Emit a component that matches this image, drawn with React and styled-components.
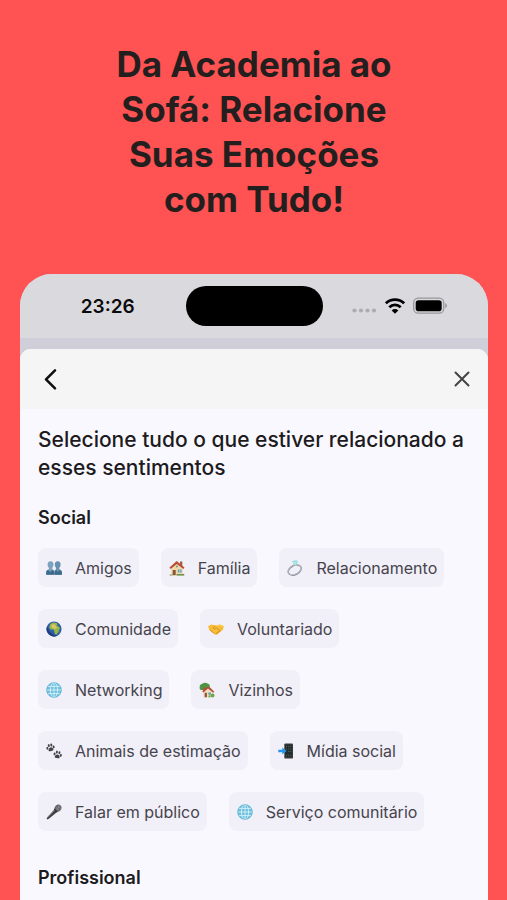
import React, { useState } from 'react';
import styled, { createGlobalStyle } from 'styled-components';

const GlobalStyle = createGlobalStyle`
    * {
        box-sizing: border-box;
    }
    body {
        margin: 0;
        background: #ff5252;
        font-family: Inter, 'Liberation Sans', sans-serif;
        color: #1d1b20;
    }
    h1, h2, h3 {
        margin: 0;
    }
    button {
        font: inherit;
        color: inherit;
        border: 0;
        padding: 0;
        background: none;
        cursor: pointer;
    }
`;

const Page = styled.main`
    min-height: 100vh;
    padding: 42px 19px 0 20px;
    display: flex;
    flex-direction: column;
    background: #ff5252;
`;

const Headline = styled.h1`
    max-width: 300px;
    margin: 0 auto 52px;
    font-size: 35px;
    line-height: 45px;
    font-weight: 700;
    text-align: center;
    color: #231f1e;
`;

const Phone = styled.section`
    flex: 1;
    display: flex;
    flex-direction: column;
    border-radius: 32px 32px 0 0;
    overflow: hidden;
    background: #d0ced8;
`;

const StatusBar = styled.div`
    height: 64px;
    display: grid;
    grid-template-columns: 1fr 137px 1fr;
    align-items: center;
    background: #dad9de;
`;

const Time = styled.span`
    padding-left: 10px;
    font-size: 19px;
    font-weight: 600;
    text-align: center;
    color: #0b0b0c;
`;

const Island = styled.div`
    height: 40px;
    border-radius: 20px;
    background: #000;
`;

const StatusIcons = styled.div`
    display: flex;
    justify-content: flex-end;
    align-items: center;
    gap: 8px;
    padding-right: 40px;
`;

const Sheet = styled.div`
    flex: 1;
    margin-top: 11px;
    border-radius: 11px 11px 0 0;
    overflow: hidden;
    background: #f9f8ff;
`;

const SheetHeader = styled.header`
    height: 60px;
    padding: 0 10px 0 14px;
    display: flex;
    justify-content: space-between;
    align-items: center;
    background: #f5f5f5;
`;

const IconButton = styled.button`
    width: 32px;
    height: 32px;
    display: flex;
    justify-content: center;
    align-items: center;
`;

const Content = styled.div`
    padding: 17px 18px 8px;
`;

const Question = styled.h2`
    font-size: 21px;
    line-height: 28px;
    font-weight: 500;
`;

const Group = styled.section`
    margin-top: ${(props) => props.$space}px;
`;

const GroupTitle = styled.h3`
    font-size: 18px;
    line-height: 24px;
    font-weight: 600;
`;

const Chips = styled.div`
    margin-top: 18px;
    display: flex;
    flex-wrap: wrap;
    gap: 22px;
`;

const Chip = styled.button`
    height: 39px;
    padding: 0 7px 0 8px;
    display: flex;
    align-items: center;
    gap: 13px;
    border-radius: 8px;
    background: ${(props) => (props.$active ? '#dcd8f0' : '#f1eff8')};
    font-size: 16px;
    color: #46444c;
    white-space: nowrap;
`;

const Picture = styled.svg`
    width: 16px;
    height: 16px;
    flex: none;
`;

const Globe = () => (
    <>
        <circle cx="8" cy="8" r="7.5" fill="#6fc0df" />
        <g fill="none" stroke="#dff5fb" strokeWidth="0.8">
            <ellipse cx="8" cy="8" rx="3.6" ry="7.3" />
            <path d="M8 .6v14.8M.6 8h14.8M2 4.4h12M2 11.6h12" />
        </g>
        <circle cx="8" cy="8" r="7.4" fill="none" stroke="#58aed2" strokeWidth="0.6" />
    </>
);

const pictures = {
    people: (
        <>
            <path d="M4.600 1.200c2 0 3 1.500 2.900 3.400-.1 1.700-.6 2.700-1.300 3.400v1.200c1.500.5 2.200 1.500 2.200 3.200v2.400H.2v-2.400c0-1.700.9-2.700 2.700-3.200V8C2.200 7.300 1.700 6.300 1.600 4.600c-.1-1.900 1-3.400 3-3.400z" fill="#7da2c0" />
            <path d="M11.700 1.200c2 0 3 1.500 2.900 3.400-.1 1.700-.6 2.700-1.300 3.400v1.200c1.700.5 2.600 1.500 2.600 3.200v2.400H8.300v-2.400c0-1.700.5-2.700 1.800-3.200V8c-.7-.7-1.200-1.700-1.300-3.400-.1-1.900.9-3.400 2.900-3.400z" fill="#6690b0" />
            <path d="M.2 14.800v-2.400c.1-1.200.8-2 1.900-2.600l2.100 2.300 2.200-2.300c1.300.5 1.800 1.400 1.800 2.600v2.400zM8.700 14.800v-2.400c.1-1.100.6-1.900 1.400-2.500l1.700 2.200 2-2.200c1.300.6 2 1.400 2.100 2.500v2.400z" fill="#3d6b8c" />
        </>
    ),
    house: (
        <>
            <path d="M2.300 8.200 8 3.400l5.800 4.800v7H2.300z" fill="#efd9a9" />
            <path d="M11 1.600h2.300v4.600L11 4.400z" fill="#9d5a45" />
            <path d="M7.700 1 .5 7.600l1.200 1.500L7.800 4l6.500 5.100 1.200-1.500z" fill="#bd4c35" />
            <path d="M3.700 10h3v5.200h-3z" fill="#8c5439" />
            <path d="M8.800 9.500h3.700v3H8.800z" fill="#629fba" />
            <path d="M10.700 9.500v3" stroke="#fff" strokeWidth=".5" />
            <circle cx="7.900" cy="6.600" r="1" fill="#7a92a2" />
            <path d="M7.500 14h7.700v1.600H7.500z" fill="#6e8f4b" />
            <path d="M.6 14.500h3v1H.6z" fill="#789a50" />
        </>
    ),
    ring: (
        <>
            <ellipse cx="7.700" cy="10" rx="6.900" ry="4.500" transform="rotate(-28 7.700 10)" fill="none" stroke="#858991" strokeWidth="1.500" />
            <ellipse cx="7.500" cy="9.700" rx="6.900" ry="4.500" transform="rotate(-28 7.500 9.700)" fill="none" stroke="#d4d7dc" strokeWidth=".6" />
            <path d="m4.700 1.600 2-1.200 3.400.2 1.100 1.700-2.700 3.300z" fill="#8fdbe0" />
            <path d="m4.700 1.600 3 .7 3.500 0M7.700 2.300l.8 3.300" stroke="#d8f7f5" strokeWidth=".5" fill="none" />
        </>
    ),
    earth: (
        <>
            <circle cx="8" cy="8" r="7.600" fill="#2f5fa8" />
            <path d="M4.200 2.900 7 1.600l3.700.5 1 1.600-1.200 1 2 .5 1.800 2.400-1.200 1-.8 2.700-2 2.400-1.400-.6-.7-3-1-1.600-2.700-.1-1.300-2z" fill="#94b747" />
            <path d="m5.500 3.600 3.400-.3 1 1.600 1.200 2-2.200 1-3.300-1.200z" fill="#d7c76c" />
            <path d="M1.200 5A7.600 7.600 0 0 0 12 14.500C7 14.500 2.500 11.500 1.200 5z" fill="#1d3d7f" />
            <path d="m12.900 10.800.8-.8-.3 1.800z" fill="#94b747" />
        </>
    ),
    handshake: (
        <>
            <path d="m.2 4.900 3.200-1.300 4 .9 4.500-1 3.900 1.600-.9 3.900-2 1-3.700 3.500-2.100.2-4-3.100L1.100 8.900z" fill="#f6bd38" />
            <path d="m7.200 4.700-2 2.500c.8 1 2 .8 3.100-.3l4.500 3.300M6.100 12.300l-4-3.200" fill="none" stroke="#d68a1e" strokeWidth=".9" />
            <path d="m7.300 12.900 2 .1 3.600-3.200-1.500-.6-3.300 2.600z" fill="#e79c26" />
            <path d="m8 4.700 3.800-.7 2.900 1.300" fill="none" stroke="#ffda68" strokeWidth=".8" />
        </>
    ),
    globe: <Globe />,
    garden: (
        <>
            <path d="M5.200 7.400h1.500v6H5.200z" fill="#76543b" />
            <path d="M.7 5.500C.2 3.700 1.600 2 3.300 1.700 4.600.3 7.200.3 8.500 1.600c1.800.1 2.800 2 2.200 3.500L6.500 8 2 8.100C1.100 7.600.4 6.700.7 5.500z" fill="#4f9442" />
            <path d="m4.200 9.500 4.600-4 5 4.300v5.500H4.200z" fill="#f0dfbd" />
            <path d="m5 6.100 5.100-1.600 5.200 5.200-1 1L9 6.400l-4.600 4.200-1.100-.9z" fill="#b54f3a" />
            <path d="M5.700 10.800h2.200v4.500H5.700z" fill="#8c5439" />
            <path d="M9.400 10.500h2.500v2.300H9.400z" fill="#6599b0" />
            <circle cx="13.600" cy="13.500" r="1.900" fill="#68a84c" />
            <circle cx="10.500" cy="14.400" r="1.100" fill="#68a84c" />
        </>
    ),
    paws: (
        <g fill="#454347">
            <g transform="rotate(-12 4.500 5)">
                <ellipse cx="1.400" cy="4.600" rx="1" ry="1.400" />
                <ellipse cx="3.300" cy="2.300" rx="1" ry="1.500" />
                <ellipse cx="5.900" cy="2.300" rx="1" ry="1.500" />
                <ellipse cx="7.800" cy="4.600" rx="1" ry="1.400" />
                <path d="M4.600 4.400c1.400 0 2.600 1.700 2.500 2.800-.1 1-1.200 1-2.500.8-1.300.2-2.400.2-2.500-.8-.1-1.100 1.100-2.800 2.500-2.800z" />
            </g>
            <g transform="translate(7 7) rotate(12 4.500 5)">
                <ellipse cx="1.400" cy="4.600" rx="1" ry="1.400" />
                <ellipse cx="3.300" cy="2.300" rx="1" ry="1.500" />
                <ellipse cx="5.900" cy="2.300" rx="1" ry="1.500" />
                <ellipse cx="7.800" cy="4.600" rx="1" ry="1.400" />
                <path d="M4.600 4.400c1.400 0 2.600 1.700 2.500 2.800-.1 1-1.200 1-2.500.8-1.300.2-2.400.2-2.500-.8-.1-1.100 1.100-2.800 2.500-2.800z" />
            </g>
        </g>
    ),
    phone: (
        <>
            <rect x="6.300" y=".4" width="8.700" height="15.200" rx="1.200" fill="#3d3b3e" />
            <rect x="7.100" y="1.800" width="7.100" height="12" fill="#252b2a" />
            <g fill="#477267">
                <path d="M8 3h1v1H8zM10.200 3h1v1h-1zM12.300 3h1v1h-1zM8 5.500h1v1H8zM10.200 5.500h1v1h-1zM12.300 5.500h1v1h-1zM10.200 8h1v1h-1zM12.300 8h1v1h-1zM8 11.800h1v1H8zM10.200 11.800h1v1h-1zM12.300 11.800h1v1h-1z" />
            </g>
            <path d="M.3 6.800h4V4.600L8.600 8l-4.300 3.400V9.200h-4z" fill="#2495ed" />
        </>
    ),
    mic: (
        <>
            <path d="m8.600 5.200 2.500 2.700-7.900 6.600-1.800.9-.8-.8.9-1.700z" fill="#414044" />
            <path d="m8.800 5.900-7.400 8" stroke="#89878c" strokeWidth=".8" />
            <path d="M8.500 4.900c-.1-3 2.600-5 5-4.200 2.100.7 2.700 3.200 1.400 5-1 1.500-2.600 2.200-4.200 2z" fill="#69676b" />
            <path d="m8.200 4.800 3.100 3.300" stroke="#2e2d30" strokeWidth="1.200" />
            <path d="m10.100 3.300 3.500 3.300M11.700 1.800l3 3M10.300 5.800l4-4.200" stroke="#a09da2" strokeWidth=".5" />
        </>
    ),
};

const socialTags = [
    { label: 'Amigos', picture: 'people' },
    { label: 'Família', picture: 'house' },
    { label: 'Relacionamento', picture: 'ring' },
    { label: 'Comunidade', picture: 'earth' },
    { label: 'Voluntariado', picture: 'handshake' },
    { label: 'Networking', picture: 'globe' },
    { label: 'Vizinhos', picture: 'garden' },
    { label: 'Animais de estimação', picture: 'paws' },
    { label: 'Mídia social', picture: 'phone' },
    { label: 'Falar em público', picture: 'mic' },
    { label: 'Serviço comunitário', picture: 'globe' },
];

const Status = () => (
    <StatusBar>
        <Time>23:26</Time>
        <Island />
        <StatusIcons>
            <svg width="25" height="18" viewBox="0 0 25 18" fill="#adacb1">
                <circle cx="2.500" cy="13.500" r="2.100" />
                <circle cx="9" cy="13.500" r="2.100" />
                <circle cx="15.500" cy="13.500" r="2.100" />
                <circle cx="22" cy="13.500" r="2.100" />
            </svg>
            <svg width="20" height="16" viewBox="0 0 20 16" fill="none" stroke="#000" strokeWidth="2.800">
                <path d="M.9 5.300a13 13 0 0 1 18.200 0" />
                <path d="M4.300 9.200a8.200 8.200 0 0 1 11.400 0" />
                <path d="M10 15.700 6.700 12.400a4.600 4.600 0 0 1 6.600 0z" fill="#000" stroke="none" />
            </svg>
            <svg width="35" height="18" viewBox="0 0 35 18">
                <rect x=".7" y="1.200" width="30" height="15" rx="4.500" fill="none" stroke="#98979b" strokeWidth="1.300" />
                <rect x="2.700" y="3.200" width="26" height="11" rx="2.800" fill="#000" />
                <path d="M32.200 6.100c2.200.7 2.200 4.500 0 5.200z" fill="#98979b" />
            </svg>
        </StatusIcons>
    </StatusBar>
);

const App = () => {
    const [selected, setSelected] = useState([]);

    const toggle = (label) => {
        setSelected((prev) =>
            prev.includes(label)
                ? prev.filter((item) => item !== label)
                : [...prev, label]
        );
    };

    return (
        <Page>
            <GlobalStyle />
            <Headline>Da Academia ao Sofá: Relacione Suas Emoções com Tudo!</Headline>
            <Phone>
                <Status />
                <Sheet>
                    <SheetHeader>
                        <IconButton type="button" aria-label="Voltar">
                            <svg width="24" height="24" viewBox="0 0 24 24" fill="none" stroke="#111" strokeWidth="2.600" strokeLinecap="round" strokeLinejoin="round">
                                <path d="M17 3.300 8 12.300 17 21.300" />
                            </svg>
                        </IconButton>
                        <IconButton type="button" aria-label="Fechar">
                            <svg width="16" height="16" viewBox="0 0 16 16" fill="none" stroke="#444" strokeWidth="2" strokeLinecap="round">
                                <path d="m1.500 1.500 13 13M14.500 1.500l-13 13" />
                            </svg>
                        </IconButton>
                    </SheetHeader>
                    <Content>
                        <Question>
                            Selecione tudo o que estiver relacionado a esses sentimentos
                        </Question>
                        <Group $space={24}>
                            <GroupTitle>Social</GroupTitle>
                            <Chips>
                                {socialTags.map(({ label, picture }) => (
                                    <Chip
                                        key={label}
                                        type="button"
                                        aria-pressed={selected.includes(label)}
                                        $active={selected.includes(label)}
                                        onClick={() => toggle(label)}
                                    >
                                        <Picture viewBox="0 0 16 16" aria-hidden="true">
                                            {pictures[picture]}
                                        </Picture>
                                        {label}
                                    </Chip>
                                ))}
                            </Chips>
                        </Group>
                        <Group $space={35}>
                            <GroupTitle>Profissional</GroupTitle>
                        </Group>
                    </Content>
                </Sheet>
            </Phone>
        </Page>
    );
};

export default App;
